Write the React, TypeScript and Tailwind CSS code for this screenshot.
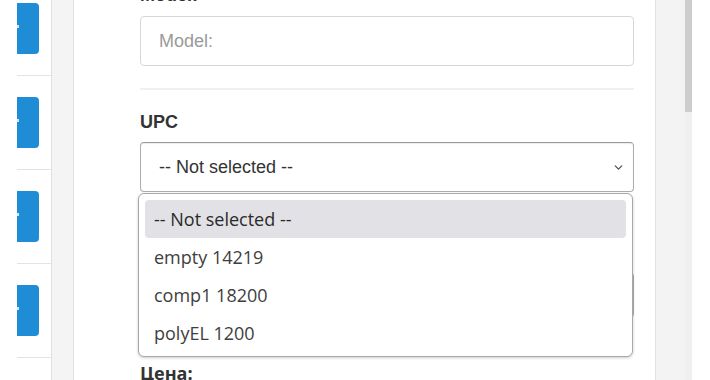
import { ChevronDown } from "lucide-react";

const options = ["-- Not selected --", "empty 14219", "comp1 18200", "polyEL 1200"];

function SideItem() {
  return (
    <div className="flex flex-col">
      <div className="relative ml-[17px] w-[22px] h-[51px] bg-[#1f8dd5] rounded-r-[4px]">
        <span className="absolute left-0 top-[22px] w-[2px] h-[3px] bg-white/80" />
      </div>
      <div className="ml-[17px] mt-[21px] mb-[21px] h-px bg-[#e3e3e3]" />
    </div>
  );
}

export default function App() {
  return (
    <div className="flex w-[710px] h-[380px] overflow-hidden bg-white font-['Liberation_Sans',Arial,sans-serif]">
      {/* sidebar */}
      <div className="w-[52px] shrink-0 pt-[3px] bg-white border-r border-[#e0e0e0]">
        <SideItem />
        <SideItem />
        <SideItem />
        <SideItem />
      </div>

      {/* gutter */}
      <div className="w-[22px] shrink-0 bg-[#f4f4f4] border-r border-[#e2e2e2]" />

      {/* form panel */}
      <div className="w-[582px] shrink-0 bg-white border-r border-[#e2e2e2] pl-[66px] pr-[21px]">
        <div className="relative -mt-[16px]">
          <p className="text-[18px] leading-[22px] font-bold text-[#333]">Model:</p>
          <div className="mt-[10px] h-[50px] rounded-[4px] border border-[#d6d6d6] flex items-center pl-[18px] text-[18px] text-[#9a9a9a]">
            Model:
          </div>
          <div className="mt-[22px] h-[2px] bg-[#f0f0f0]" />

          <p className="mt-[21px] text-[18px] leading-[22px] font-bold text-[#333]">UPC</p>
          <div className="mt-[9px] h-[50px] rounded-[4px] border border-[#adadad] border-t-[#9a9a9a] flex items-center justify-between pl-[18px] pr-[8px] text-[18px] text-[#333] shadow-[inset_0_1px_1px_rgba(0,0,0,0.08)]">
            <span>-- Not selected --</span>
            <ChevronDown size={13} strokeWidth={2.5} className="text-[#555]" />
          </div>

          {/* field hidden under the open list */}
          <div className="mt-[80px] h-[46px] rounded-[4px] border border-[#adadad]" />

          <p className="mt-[44px] text-[18px] leading-[22px] font-bold text-[#333] font-['Open_Sans',sans-serif]">Цена:</p>

          {/* open dropdown list */}
          <div className="absolute left-[-2px] right-[1px] top-[209px] h-[164px] bg-white border border-[#a8a8a8] rounded-[6px] shadow-[0_1px_3px_rgba(0,0,0,0.2)] px-[6px] pt-[6px] font-['Open_Sans',sans-serif] text-[18px] text-[#3e3e3e]">
            {options.map((o, i) => (
              <div
                key={o}
                className={
                  "h-[38px] flex items-center pl-[9px] rounded-[4px] " +
                  (i === 0 ? "bg-[#e1e1e6] text-[#2a2a2a]" : "")
                }
              >
                {o}
              </div>
            ))}
          </div>
        </div>
      </div>

      {/* right gutter + scrollbar */}
      <div className="w-[29px] shrink-0 bg-[#f3f3f3]" />
      <div className="w-[7px] shrink-0 bg-[#f0f0f0] flex flex-col">
        <div className="h-[112px] bg-[#cdcdcd]" />
      </div>
      <div className="flex-1 bg-white" />
    </div>
  );
}
